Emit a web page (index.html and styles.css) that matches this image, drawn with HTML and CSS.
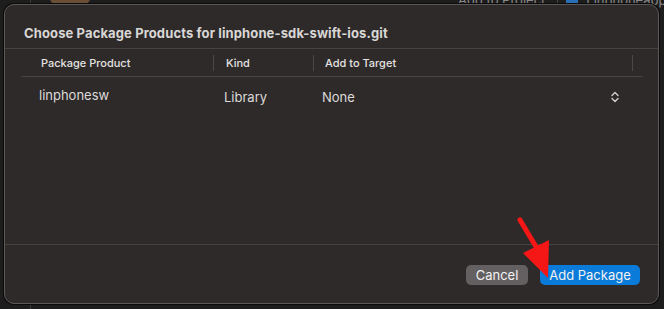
FILE: index.html
```html
<!DOCTYPE html>
<html lang="en">
<head>
    <meta charset="UTF-8">
    <title>Choose Package Products</title>
    <link rel="stylesheet" href="styles.css">
</head>
<body>
    <div class="backdrop">
        <div class="bg-line"></div>
        <div class="bg-icon"></div>
        <div class="bg-toolbar">
            <span class="bg-label">Add to Project</span>
            <span class="bg-sep"></span>
            <span class="bg-square"></span>
            <span class="bg-label">Linphoneapp</span>
        </div>
    </div>

    <div class="sheet">
        <div class="sheet-title">Choose Package Products for linphone-sdk-swift-ios.git</div>

        <div class="products">
            <div class="products-head">
                <div class="col col-product">Package Product</div>
                <div class="col col-kind">Kind</div>
                <div class="col col-target">Add to Target</div>
                <div class="col col-end"></div>
            </div>
            <div class="products-row">
                <div class="cell cell-product">linphonesw</div>
                <div class="cell cell-kind">Library</div>
                <div class="cell cell-target">
                    <span>None</span>
                    <svg class="updown" width="8" height="12" viewBox="0 0 8 12">
                        <path d="M1 4.5 L4 1.5 L7 4.5 M1 7.5 L4 10.5 L7 7.5" fill="none" stroke="#cfcfcf" stroke-width="1.4" stroke-linecap="round" stroke-linejoin="round"/>
                    </svg>
                </div>
            </div>
        </div>

        <div class="sheet-footer">
            <button class="btn btn-cancel">Cancel</button>
            <button class="btn btn-primary">Add Package</button>
        </div>
    </div>

    <!-- red annotation arrow drawn over the dialog -->
    <svg class="arrow" width="664" height="309" viewBox="0 0 664 309">
        <line x1="520" y1="220" x2="538" y2="250" stroke="#f51616" stroke-width="5" stroke-linecap="round"/>
        <polygon points="523,253 549,240 548,278" fill="#f51616"/>
    </svg>
</body>
</html>
```

FILE: styles.css
```css
body {
    margin: 0;
    width: 664px;
    height: 309px;
    overflow: hidden;
    background-color: #1e1d1d;
    font-family: Inter, "Noto Sans", sans-serif;
    position: relative;
}
.backdrop {
    position: absolute;
    left: 0;
    top: 0;
    width: 664px;
    height: 309px;
}
.bg-line {
    position: absolute;
    left: 30px;
    top: 0;
    width: 1px;
    height: 309px;
    background-color: #3a3838;
}
.bg-icon {
    position: absolute;
    left: 50px;
    top: -14px;
    width: 40px;
    height: 18px;
    border-radius: 6px;
    background-color: #6a4f36;
}
.bg-toolbar {
    position: absolute;
    left: 458px;
    top: -10px;
    display: flex;
    align-items: center;
    gap: 8px;
    font-size: 13px;
    color: #8a8888;
    white-space: nowrap;
}
.bg-sep {
    width: 1px;
    height: 20px;
    background-color: #444;
    margin-left: 4px;
}
.bg-square {
    width: 12px;
    height: 12px;
    border-radius: 2px;
    background-color: #2a6fb5;
}
.sheet {
    position: absolute;
    left: 4px;
    top: 4px;
    width: 655px;
    height: 300px;
    box-sizing: border-box;
    display: flex;
    flex-direction: column;
    background-color: #2e2a29;
    border: 1px solid #5c5857;
    border-radius: 10px;
    box-shadow: 0 0 0 1px #0b0b0b;
    color: #dedcdb;
}
.sheet-title {
    padding: 20px 0 7px 19px;
    line-height: 16px;
    font-size: 13px;
    font-weight: 700;
    letter-spacing: 0.12px;
    color: #d9d7d6;
    border-bottom: 1px solid #48433f;
}
.products {
    flex: 1;
    margin: 0 15px 0 16px;
}
.products-head {
    display: grid;
    grid-template-columns: 192px 100px 319px 11px;
    padding: 6px 0 5px;
    border-bottom: 1px solid #4a4544;
    font-size: 11px;
    font-weight: 500;
    color: #e4e2e1;
}
.col {
    height: 16px;
    line-height: 16px;
}
.col-product {
    padding-left: 20px;
}
.col-kind {
    padding-left: 12px;
    border-left: 1px solid #4d4847;
}
.col-target {
    padding-left: 11px;
    border-left: 1px solid #4d4847;
}
.col-end {
    border-left: 1px solid #4d4847;
}
.products-row {
    display: grid;
    grid-template-columns: 192px 100px 319px;
    font-size: 13px;
    color: #dcdad9;
    padding-top: 9px;
}
.cell {
    line-height: 18px;
}
.cell-product {
    padding-left: 18px;
}
.cell-kind {
    padding-left: 11px;
    padding-top: 2px;
}
.cell-target {
    padding-left: 9px;
    padding-top: 2px;
    display: flex;
    justify-content: space-between;
    align-items: center;
}
.updown {
    margin-right: 13px;
}
.sheet-footer {
    display: flex;
    justify-content: flex-end;
    gap: 12px;
    height: 59px;
    box-sizing: border-box;
    padding: 20px 18px 0 0;
    border-top: 1px solid #48433f;
}
.btn {
    height: 20px;
    padding: 0 0 1px;
    border: none;
    border-radius: 5px;
    font-family: Inter, "Noto Sans", sans-serif;
    font-size: 13px;
    color: #f2f2f2;
    cursor: pointer;
}
.btn-cancel {
    width: 62px;
    background-color: #646061;
}
.btn-primary {
    width: 100px;
    background-color: #0a7bd9;
}
.arrow {
    position: absolute;
    left: 0;
    top: 0;
}
```
